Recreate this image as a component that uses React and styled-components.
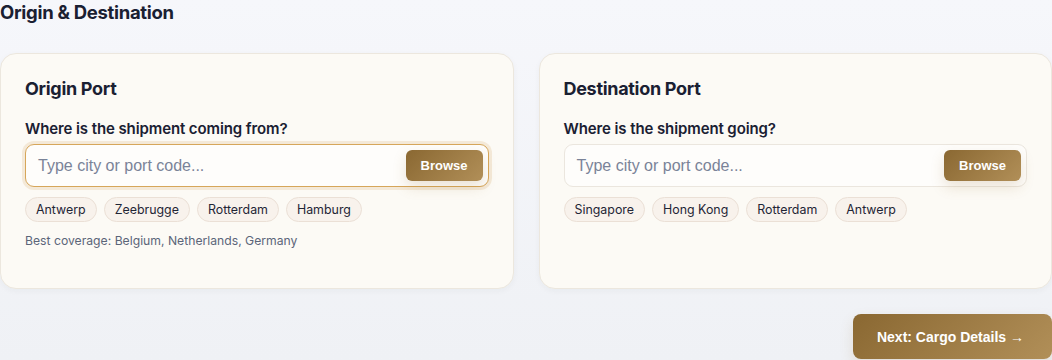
import React from "react";
import styled, { createGlobalStyle } from "styled-components";

const Global = createGlobalStyle`
  html, body { margin: 0; padding: 0; }
  body {
    background: linear-gradient(180deg, #f6f7fb 0%, #eff1f5 100%);
    min-height: 360px;
    font-family: "Inter", "Noto Sans", sans-serif;
    color: #1c2233;
  }
`;

const Page = styled.div`
  width: 1052px;
  height: 360px;
  overflow: hidden;
  display: flex;
  flex-direction: column;
`;

const Heading = styled.h2`
  margin: 0;
  font-size: 18.5px;
  line-height: 24px;
  font-weight: 700;
  letter-spacing: -0.3px;
  color: #1a2032;
`;

const Grid = styled.div`
  margin-top: 29px;
  display: grid;
  grid-template-columns: 1fr 1fr;
  gap: 25px;
`;

const Card = styled.section`
  background: #fcfaf5;
  border: 1px solid #ece7de;
  border-radius: 16px;
  padding: 23px 24px 0 24px;
  height: 236px;
  box-sizing: border-box;
  box-shadow: 0 2px 6px rgba(30, 40, 60, 0.04);
`;

const CardTitle = styled.h3`
  margin: 0 0 18px 0;
  font-size: 18px;
  line-height: 24px;
  font-weight: 700;
  letter-spacing: -0.3px;
  color: #1a2032;
`;

const Label = styled.div`
  font-size: 15px;
  line-height: 20px;
  font-weight: 600;
  letter-spacing: -0.1px;
  color: #1a2032;
  margin-bottom: 5px;
`;

const InputWrap = styled.div`
  height: 43px;
  box-sizing: border-box;
  display: flex;
  align-items: center;
  justify-content: space-between;
  padding: 0 5px 0 12px;
  background: #fefdfb;
  border-radius: 9px;
  border: 1px solid ${(p) => (p.$focused ? "#d6a65a" : "#ebe6de")};
  box-shadow: ${(p) => (p.$focused ? "0 0 0 3px #f4e9d8" : "none")};
`;

const Placeholder = styled.span`
  font-family: "Liberation Sans", Arial, sans-serif;
  font-size: 16px;
  color: #7a8398;
`;

const BrowseButton = styled.button`
  width: 77px;
  height: 31px;
  border: none;
  border-radius: 6px;
  background: linear-gradient(135deg, #8a6832 0%, #b18f58 100%);
  color: #fff;
  font-family: "Liberation Sans", Arial, sans-serif;
  font-weight: 700;
  font-size: 13px;
  box-shadow: 0 6px 14px rgba(150, 110, 50, 0.18);
  padding: 0;
`;

const Chips = styled.div`
  display: flex;
  gap: 7px;
  margin-top: 10px;
`;

const Chip = styled.span`
  height: 25px;
  box-sizing: border-box;
  display: inline-flex;
  align-items: center;
  padding: 0 10px;
  border-radius: 13px;
  border: 1px solid #ebe0d6;
  background: #f8f2ec;
  font-size: 12.4px;
  color: #1f2535;
`;

const Note = styled.div`
  margin-top: 11px;
  font-size: 12.2px;
  line-height: 16px;
  color: #5b6579;
`;

const Footer = styled.div`
  display: flex;
  justify-content: flex-end;
  margin-top: 25px;
`;

const NextButton = styled.button`
  width: 199px;
  height: 45px;
  border: none;
  border-radius: 8px;
  background: linear-gradient(135deg, #8a6832 0%, #b18f58 100%);
  color: #fff;
  font-family: "Liberation Sans", Arial, sans-serif;
  font-weight: 700;
  font-size: 14px;
  padding: 0 4px 0 0;
  box-shadow: 0 6px 14px rgba(150, 110, 50, 0.15);
`;

const PortCard = ({ title, label, chips, note, focused }) => (
  <Card>
    <CardTitle>{title}</CardTitle>
    <Label>{label}</Label>
    <InputWrap $focused={focused}>
      <Placeholder>Type city or port code...</Placeholder>
      <BrowseButton>Browse</BrowseButton>
    </InputWrap>
    <Chips>
      {chips.map((c) => (
        <Chip key={c}>{c}</Chip>
      ))}
    </Chips>
    {note && <Note>{note}</Note>}
  </Card>
);

export default function App() {
  return (
    <Page>
      <Global />
      <Heading>Origin &amp; Destination</Heading>
      <Grid>
        <PortCard
          focused
          title="Origin Port"
          label="Where is the shipment coming from?"
          chips={["Antwerp", "Zeebrugge", "Rotterdam", "Hamburg"]}
          note="Best coverage: Belgium, Netherlands, Germany"
        />
        <PortCard
          title="Destination Port"
          label="Where is the shipment going?"
          chips={["Singapore", "Hong Kong", "Rotterdam", "Antwerp"]}
        />
      </Grid>
      <Footer>
        <NextButton>Next: Cargo Details →</NextButton>
      </Footer>
    </Page>
  );
}
